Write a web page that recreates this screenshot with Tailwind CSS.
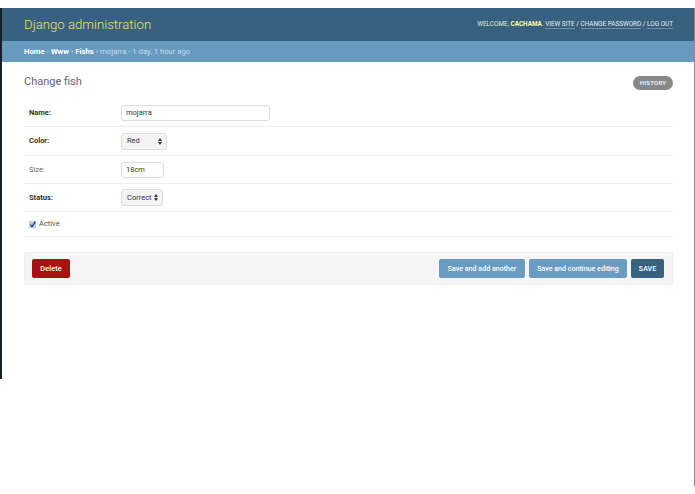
<!DOCTYPE html>
<html lang="en">
<head>
    <meta charset="UTF-8" />
    <title>Change fish | Django site admin</title>
    <script src="https://cdn.jsdelivr.net/npm/@tailwindcss/browser@4"></script>
</head>
<body class="relative h-[494px] w-[695px] overflow-hidden bg-white pt-2 font-['Roboto',sans-serif] text-[#333]">
    <!-- window edges from the capture -->
    <div class="absolute left-0 top-2 h-[371px] w-[2px] bg-[#14202a]"></div>
    <div class="absolute right-0 top-2 h-[478px] w-[1px] bg-[#8a8a8a]"></div>

    <!-- header -->
    <div class="flex h-[33px] items-center justify-between bg-[#38607f] pl-6 pr-[22px]">
        <div class="text-[13.2px] font-light leading-none text-[#f0e060]">Django administration</div>
        <div class="text-[6.4px] uppercase text-[#e4ecc8]">
            Welcome, <b class="font-bold text-[#ffffa8]">Cachama</b>.
            <span class="border-b border-white/30 text-[#e6eef3]">View site</span> <span class="text-[#e6eef3]">/</span>
            <span class="border-b border-white/30 text-[#e6eef3]">Change password</span> <span class="text-[#e6eef3]">/</span>
            <span class="border-b border-white/30 text-[#e6eef3]">Log out</span>
        </div>
    </div>

    <!-- breadcrumbs -->
    <div class="flex h-[21px] items-center bg-[#689ac0] pl-6 text-[7.7px] text-[#c4dce8]">
        <b class="font-bold text-white">Home</b><span class="mx-[2px]">›</span><b class="font-bold text-white">Www</b><span class="mx-[2px]">›</span><b class="font-bold text-white">Fishs</b><span class="mx-[2px]">›</span>mojarra - 1 day, 1 hour ago
    </div>

    <div class="pl-6 pr-[22px]">
        <div class="flex h-[37px] items-center justify-between">
            <h1 class="mt-1 text-[11px] font-normal text-[#666]">Change fish</h1>
            <div class="mt-1 flex h-[14px] w-10 items-center justify-center rounded-full bg-[#888] text-[6px] font-medium tracking-[0.3px] text-white">HISTORY</div>
        </div>

        <!-- form rows -->
        <div class="flex h-[28px] items-center border-b border-[#eee] pl-[5px]">
            <label class="w-[92px] text-[7.5px] font-bold">Name:</label>
            <div class="flex h-[16px] w-[149px] items-center rounded-[3px] border border-[#ddd] pl-1 text-[7.5px]">mojarra</div>
        </div>
        <div class="flex h-[29px] items-center border-b border-[#eee] pl-[5px]">
            <label class="w-[92px] text-[7.5px] font-bold">Color:</label>
            <div class="flex h-[17px] w-[46px] items-center justify-between rounded-[3px] border border-[#ddd] bg-[#f4f4f4] pl-[5px] pr-1 text-[7.5px]">
                Red
                <svg width="4" height="7" viewBox="0 0 4 7" class="fill-[#333]"><path d="M2 0 4 3H0ZM0 4h4L2 7Z" /></svg>
            </div>
        </div>
        <div class="flex h-[28px] items-center border-b border-[#eee] pl-[5px]">
            <label class="w-[92px] text-[7.5px] text-[#666]">Size:</label>
            <div class="flex h-[16px] w-[43px] items-center rounded-[3px] border border-[#ddd] pl-1 text-[7.5px]">18cm</div>
        </div>
        <div class="flex h-[28px] items-center border-b border-[#eee] pl-[5px]">
            <label class="w-[92px] text-[7.5px] font-bold">Status:</label>
            <div class="flex h-[17px] w-[42px] items-center justify-between rounded-[3px] border border-[#ddd] bg-[#f4f4f4] pl-[5px] pr-1 text-[7.5px]">
                Correct
                <svg width="4" height="7" viewBox="0 0 4 7" class="fill-[#333]"><path d="M2 0 4 3H0ZM0 4h4L2 7Z" /></svg>
            </div>
        </div>
        <div class="flex h-[25px] items-center border-b border-[#eee] pl-[5px]">
            <svg width="7" height="7" viewBox="0 0 7 7" class="mr-[3px]">
                <rect width="7" height="7" rx="1" fill="#b9cde6" />
                <path d="M1.4 3.6 3 5.6 6.4 .6" fill="none" stroke="#1f3f70" stroke-width="1.3" />
            </svg>
            <label class="text-[7.5px] text-[#555]">Active</label>
        </div>

        <!-- submit row -->
        <div class="mt-[15px] flex h-[33px] items-center justify-between rounded-[2px] border border-[#eee] bg-[#f5f5f5] pl-[7px] pr-2">
            <div class="flex h-[19px] w-[38px] items-center justify-center rounded-[2px] bg-[#a81012] text-[7.5px] font-medium text-white">Delete</div>
            <div class="flex gap-1">
                <div class="flex h-[19px] w-[86px] items-center justify-center rounded-[2px] bg-[#6a9bc0] pt-[1px] text-[7.1px] font-medium text-white">Save and add another</div>
                <div class="flex h-[19px] w-[98px] items-center justify-center rounded-[2px] bg-[#6a9bc0] pt-[1px] text-[7.1px] font-medium text-white">Save and continue editing</div>
                <div class="flex h-[19px] w-[33px] items-center justify-center rounded-[2px] bg-[#38607f] pt-[1px] text-[7.1px] font-medium text-white">SAVE</div>
            </div>
        </div>
    </div>
</body>
</html>
